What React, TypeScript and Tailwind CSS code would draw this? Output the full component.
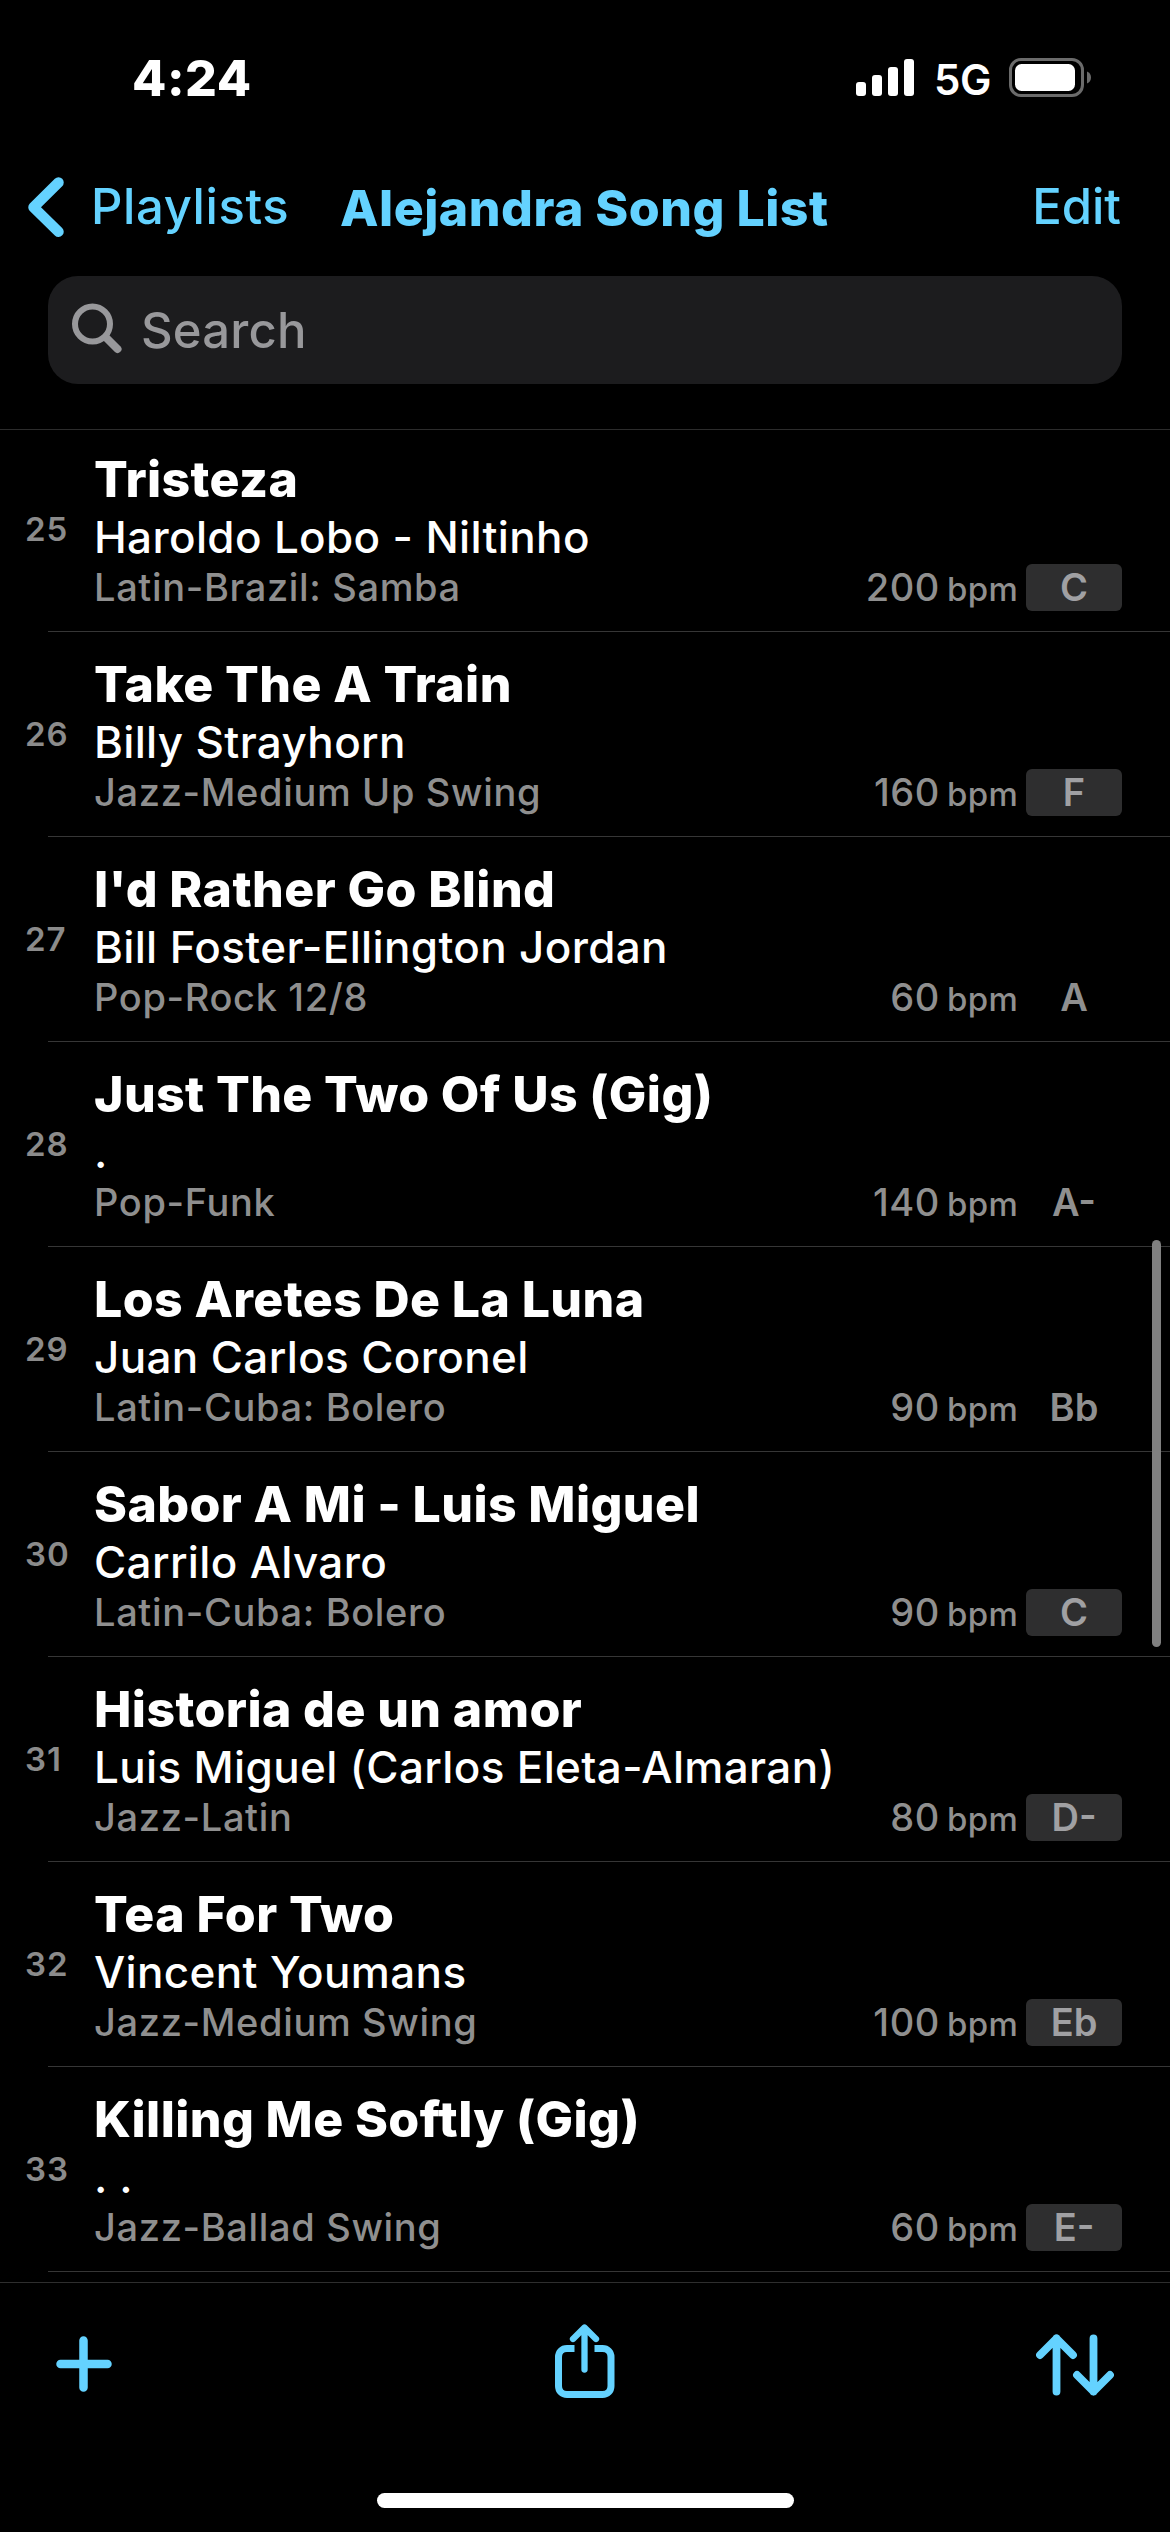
import React from 'react';

interface Song {
  index: number;
  title: string;
  composer: string;
  style: string;
  bpm: number;
  songKey: string;
  transposed: boolean;
}

const songs: Song[] = [
  { index: 25, title: 'Tristeza', composer: 'Haroldo Lobo - Niltinho', style: 'Latin-Brazil: Samba', bpm: 200, songKey: 'C', transposed: true },
  { index: 26, title: 'Take The A Train', composer: 'Billy Strayhorn', style: 'Jazz-Medium Up Swing', bpm: 160, songKey: 'F', transposed: true },
  { index: 27, title: "I'd Rather Go Blind", composer: 'Bill Foster-Ellington Jordan', style: 'Pop-Rock 12/8', bpm: 60, songKey: 'A', transposed: false },
  { index: 28, title: 'Just The Two Of Us (Gig)', composer: '.', style: 'Pop-Funk', bpm: 140, songKey: 'A-', transposed: false },
  { index: 29, title: 'Los Aretes De La Luna', composer: 'Juan Carlos Coronel', style: 'Latin-Cuba: Bolero', bpm: 90, songKey: 'Bb', transposed: false },
  { index: 30, title: 'Sabor A Mi - Luis Miguel', composer: 'Carrilo Alvaro', style: 'Latin-Cuba: Bolero', bpm: 90, songKey: 'C', transposed: true },
  { index: 31, title: 'Historia de un amor', composer: 'Luis Miguel (Carlos Eleta-Almaran)', style: 'Jazz-Latin', bpm: 80, songKey: 'D-', transposed: true },
  { index: 32, title: 'Tea For Two', composer: 'Vincent Youmans', style: 'Jazz-Medium Swing', bpm: 100, songKey: 'Eb', transposed: true },
  { index: 33, title: 'Killing Me Softly (Gig)', composer: '. .', style: 'Jazz-Ballad Swing', bpm: 60, songKey: 'E-', transposed: true },
];

const StatusBar: React.FC = () => (
  <div className="h-[156px] pl-[132px] pr-[78px] flex items-start justify-between text-white">
    <span className="mt-[48px] text-[50px] leading-[60px] font-extrabold tracking-[0.5px]">4:24</span>
    <div className="mt-[58px] flex items-start">
      <svg width="58" height="38" viewBox="0 0 58 38" fill="currentColor">
        <rect x="0" y="24" width="10" height="14" rx="3" />
        <rect x="16" y="17" width="10" height="21" rx="3" />
        <rect x="32" y="9" width="10" height="29" rx="3" />
        <rect x="48" y="1" width="10" height="37" rx="3" />
      </svg>
      <span className="ml-[20px] -mt-[4px] w-[56px] text-[42px] leading-[52px] font-semibold tracking-[-0.5px]">5G</span>
      <svg className="ml-[19px]" width="83" height="39" viewBox="0 0 83 39">
        <rect x="1.5" y="1.5" width="72" height="36" rx="10.5" fill="none" stroke="#6b6b6b" strokeWidth="3" />
        <rect x="6" y="6" width="60" height="27" rx="6.5" fill="#fff" />
        <path d="M78 13.5c2.6 1 4 3.3 4 6s-1.4 5-4 6z" fill="#6b6b6b" />
      </svg>
    </div>
  </div>
);

const NavBar: React.FC = () => (
  <div className="h-[120px] pl-[28px] pr-[49px] flex items-start text-[#64d2ff]">
    <svg className="mt-[21px]" width="37" height="61" viewBox="0 0 37 61" fill="none" stroke="currentColor" strokeWidth="10.5" strokeLinecap="round" strokeLinejoin="round">
      <path d="M30.5 5.5L5.5 30.2l25 24.5" />
    </svg>
    <span className="ml-[26px] mt-[21px] w-[249px] text-[49px] leading-[60px] font-[450] tracking-[0.6px]">Playlists</span>
    <span className="mt-[22px] text-[50px] leading-[60px] font-extrabold tracking-[0.5px] whitespace-nowrap">Alejandra Song List</span>
    <span className="ml-auto mt-[21px] text-[49px] leading-[60px] font-[450]">Edit</span>
  </div>
);

const SearchField: React.FC = () => (
  <div className="mx-[48px] h-[108px] rounded-[30px] bg-[#1c1c1e] flex items-center text-[#98989b]">
    <svg className="ml-[23px] -mt-[2px]" width="52" height="52" viewBox="0 0 52 52" fill="none" stroke="currentColor" strokeWidth="6" strokeLinecap="round">
      <circle cx="21.5" cy="21" r="17.5" />
      <path d="M35 34.5L46.5 46" strokeWidth="8" />
    </svg>
    <span className="ml-[18px] mt-px text-[49px] leading-[60px] font-[450] tracking-[0.2px]">Search</span>
  </div>
);

const SongRow: React.FC<{ song: Song }> = ({ song }) => (
  <li className="h-[205px] flex">
    <div className="w-[48px] flex-shrink-0 pt-[82px] pl-[25px]">
      <span className="text-[33px] leading-[40px] font-semibold tracking-[1px] text-[#8b8b8b]">{song.index}</span>
    </div>
    <div className="flex-1 border-b border-[#363636] pl-[46px] pr-[48px] pt-[22px]">
      <div className="mb-px text-[50px] leading-[60px] font-extrabold tracking-[0.4px] text-white">{song.title}</div>
      <div className="text-[44px] leading-[54px] font-medium tracking-[0.35px] text-white">{song.composer}</div>
      <div className="flex items-baseline text-[38px] leading-[47px] font-medium text-[#8f8f8f]">
        <span className="tracking-[0.65px]">{song.style}</span>
        <span className="ml-auto tracking-[0.6px]">{song.bpm}</span>
        <span className="ml-[7px] w-[79px] text-[33px] tracking-[0.4px]">bpm</span>
        <span className={`w-[96px] h-[47px] rounded-[6px] text-center font-semibold ${song.transposed ? 'bg-[#2e2e2f] text-[#a0a0a3]' : ''}`}>
          {song.songKey}
        </span>
      </div>
    </div>
  </li>
);

const Toolbar: React.FC = () => (
  <div className="h-[250px] border-t border-[#2e2e2e] pl-[56px] pr-[56px] flex justify-between text-[#64d2ff]">
    <svg className="mt-[53px]" width="56" height="56" viewBox="0 0 56 56" fill="none" stroke="currentColor" strokeWidth="8.5" strokeLinecap="round">
      <path d="M27.5 4.5v47M4.5 28h47" />
    </svg>
    <svg className="ml-[22px] mt-[41px]" width="60" height="75" viewBox="0 0 60 75" fill="none" stroke="currentColor" strokeWidth="7">
      <path d="M19.5 24.5H12c-5 0-8.5 3.5-8.5 8.5v29c0 5 3.5 8.5 8.5 8.5h35.5c5 0 8.5-3.5 8.5-8.5V33c0-5-3.5-8.5-8.5-8.5h-8" />
      <path d="M29.5 4v41.5M18 15L29.5 3.5 41 15" strokeWidth="6.3" strokeLinecap="round" strokeLinejoin="round" />
    </svg>
    <svg className="mt-[51px]" width="78" height="62" viewBox="0 0 78 62" fill="none" stroke="currentColor" strokeWidth="7.8" strokeLinecap="round" strokeLinejoin="round">
      <path d="M20.5 57.5v-53M4 21L20.5 4.5 37 21" />
      <path d="M57.5 4.5v53M41 41l16.5 16.5L74 41" />
    </svg>
  </div>
);

export default function App() {
  return (
    <div className="relative w-[1170px] h-[2532px] overflow-hidden bg-black flex flex-col font-['Inter',sans-serif]">
      <StatusBar />
      <NavBar />
      <SearchField />
      <div className="mt-[45px] h-px flex-shrink-0 bg-[#2c2c2c]" />
      <ul className="-mt-[3px] flex-1 min-h-0">
        {songs.map((song) => (
          <SongRow key={song.index} song={song} />
        ))}
      </ul>
      <Toolbar />

      {/* scroll indicator */}
      <div className="absolute right-[9px] top-[1240px] w-[9px] h-[407px] rounded-full bg-[#808080]" />
      {/* home indicator */}
      <div className="absolute left-[377px] bottom-[24px] w-[417px] h-[15px] rounded-full bg-white" />
    </div>
  );
}
